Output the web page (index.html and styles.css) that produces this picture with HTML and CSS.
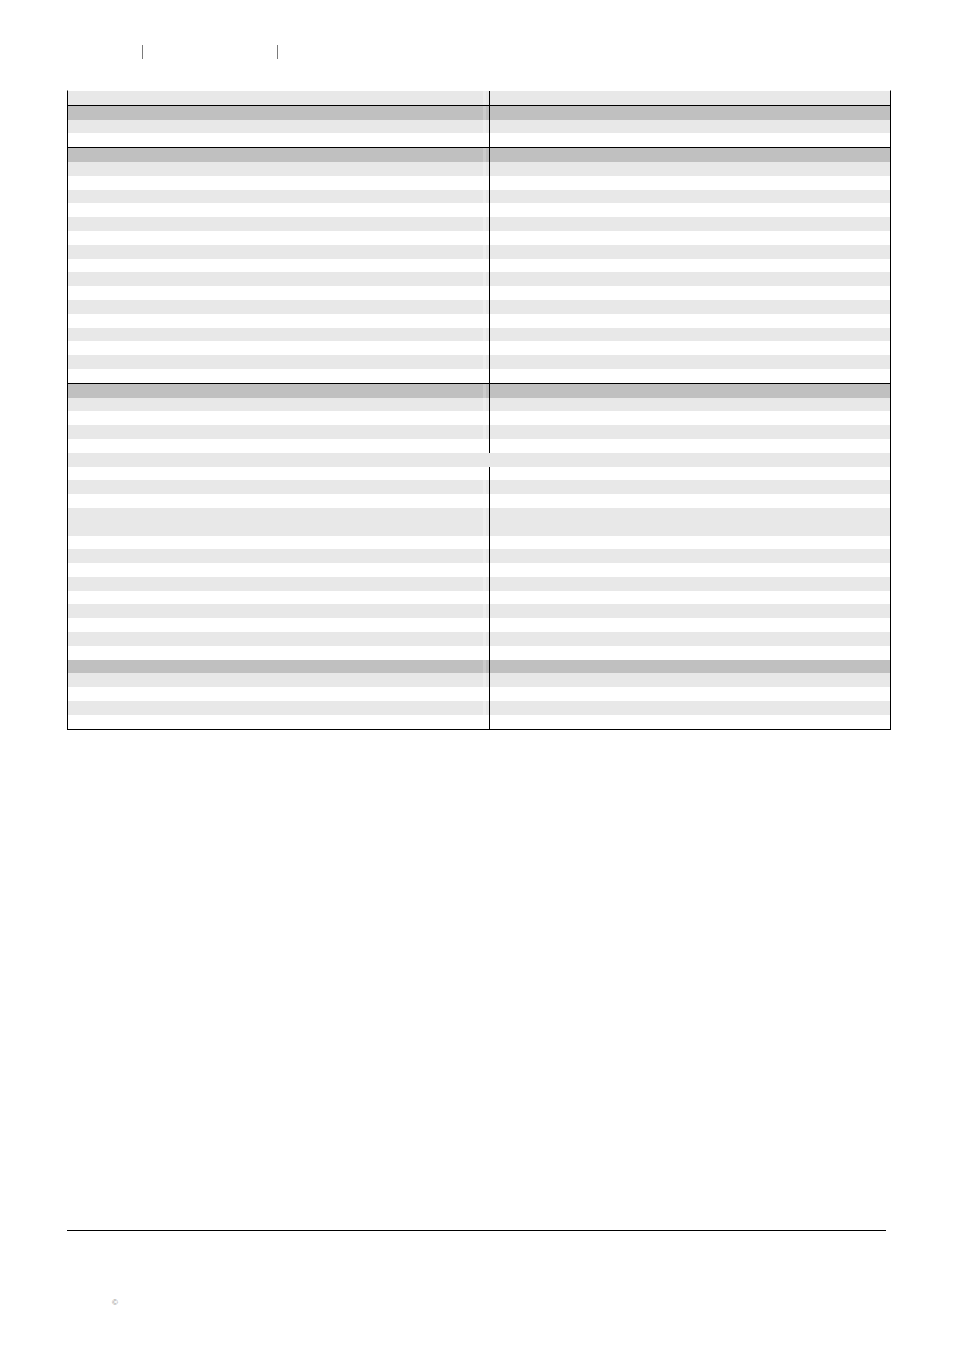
FILE: index.html
```html
<!DOCTYPE html>
<html>
<head>
<meta charset="utf-8">
<link rel="stylesheet" href="styles.css">
</head>
<body>
<div class="page">
  <div class="top">
    <span class="bar"></span>
    <span class="bar bar2"></span>
  </div>

  <div class="tbl">
    <div class="row l"><div class="c"></div><div class="d"></div><div class="c"></div></div>
    <div class="sep"></div>
    <div class="row h"><div class="c"></div><div class="d"></div><div class="c"></div></div>
    <div class="row l"><div class="c"></div><div class="d"></div><div class="c"></div></div>
    <div class="row w"><div class="c"></div><div class="d"></div><div class="c"></div></div>
    <div class="sep"></div>
    <div class="row h"><div class="c"></div><div class="d"></div><div class="c"></div></div>
    <div class="row l"><div class="c"></div><div class="d"></div><div class="c"></div></div>
    <div class="row w"><div class="c"></div><div class="d"></div><div class="c"></div></div>
    <div class="row l"><div class="c"></div><div class="d"></div><div class="c"></div></div>
    <div class="row w"><div class="c"></div><div class="d"></div><div class="c"></div></div>
    <div class="row l"><div class="c"></div><div class="d"></div><div class="c"></div></div>
    <div class="row w"><div class="c"></div><div class="d"></div><div class="c"></div></div>
    <div class="row l"><div class="c"></div><div class="d"></div><div class="c"></div></div>
    <div class="row w"><div class="c"></div><div class="d"></div><div class="c"></div></div>
    <div class="row l"><div class="c"></div><div class="d"></div><div class="c"></div></div>
    <div class="row w"><div class="c"></div><div class="d"></div><div class="c"></div></div>
    <div class="row l"><div class="c"></div><div class="d"></div><div class="c"></div></div>
    <div class="row w"><div class="c"></div><div class="d"></div><div class="c"></div></div>
    <div class="row l"><div class="c"></div><div class="d"></div><div class="c"></div></div>
    <div class="row w"><div class="c"></div><div class="d"></div><div class="c"></div></div>
    <div class="row l"><div class="c"></div><div class="d"></div><div class="c"></div></div>
    <div class="row w"><div class="c"></div><div class="d"></div><div class="c"></div></div>
    <div class="sep"></div>
    <div class="row h"><div class="c"></div><div class="d"></div><div class="c"></div></div>
    <div class="row l"><div class="c"></div><div class="d"></div><div class="c"></div></div>
    <div class="row w"><div class="c"></div><div class="d"></div><div class="c"></div></div>
    <div class="row l"><div class="c"></div><div class="d"></div><div class="c"></div></div>
    <div class="row w"><div class="c"></div><div class="d"></div><div class="c"></div></div>
    <div class="row l full"><div class="c span"></div></div>
    <div class="row w"><div class="c"></div><div class="d"></div><div class="c"></div></div>
    <div class="row l"><div class="c"></div><div class="d"></div><div class="c"></div></div>
    <div class="row w"><div class="c"></div><div class="d"></div><div class="c"></div></div>
    <div class="row l tall"><div class="c"></div><div class="d"></div><div class="c"></div></div>
    <div class="row w"><div class="c"></div><div class="d"></div><div class="c"></div></div>
    <div class="row l"><div class="c"></div><div class="d"></div><div class="c"></div></div>
    <div class="row w"><div class="c"></div><div class="d"></div><div class="c"></div></div>
    <div class="row l"><div class="c"></div><div class="d"></div><div class="c"></div></div>
    <div class="row w"><div class="c"></div><div class="d"></div><div class="c"></div></div>
    <div class="row l"><div class="c"></div><div class="d"></div><div class="c"></div></div>
    <div class="row w"><div class="c"></div><div class="d"></div><div class="c"></div></div>
    <div class="row l"><div class="c"></div><div class="d"></div><div class="c"></div></div>
    <div class="row w"><div class="c"></div><div class="d"></div><div class="c"></div></div>
    <div class="row h"><div class="c"></div><div class="d"></div><div class="c"></div></div>
    <div class="row l"><div class="c"></div><div class="d"></div><div class="c"></div></div>
    <div class="row w"><div class="c"></div><div class="d"></div><div class="c"></div></div>
    <div class="row l"><div class="c"></div><div class="d"></div><div class="c"></div></div>
    <div class="row w"><div class="c"></div><div class="d"></div><div class="c"></div></div>
  </div>

  <div class="foot">
    <div class="rule"></div>
    <div class="copy">&copy;</div>
  </div>
</div>
</body>
</html>
```

FILE: styles.css
```css
html, body {
  margin: 0;
  padding: 0;
  background: #ffffff;
}

body {
  font-family: "Liberation Sans", Arial, sans-serif;
  width: 954px;
  height: 1350px;
  overflow: hidden;
}

.page {
  display: flex;
  flex-direction: column;
  padding-left: 67px;
}

.top {
  height: 90px;
  box-sizing: border-box;
  padding-top: 45px;
  padding-left: 75px;
  display: flex;
  align-items: flex-start;
}

.bar {
  display: block;
  width: 1px;
  height: 14px;
  background: #7a7a7a;
}

.bar2 {
  margin-left: 134px;
}

.tbl {
  width: 824px;
  box-sizing: border-box;
  border-left: 1px solid #000;
  border-right: 1px solid #000;
  border-bottom: 1px solid #000;
  border-top: 1px solid #fff;
  display: flex;
  flex-direction: column;
}

.row {
  display: grid;
  grid-template-columns: 421px 1px 400px;
  height: 13.8px;
}

.row.tall {
  height: 27.6px;
}

.row.full {
  grid-template-columns: 822px;
}

.d {
  background: #000;
}

.row.l .c {
  background: #e8e8e8;
}

.row.l .c:first-child {
  background: linear-gradient(to right, transparent 415px, #eeeeee 415px, #eeeeee 418px, transparent 418px), #e8e8e8;
}

.row.l .c.span {
  background: #e8e8e8;
}

.row.h .c {
  background: #c0c0c0;
}

.row.h .c:first-child {
  background: linear-gradient(to right, transparent 415px, #cccccc 415px, #cccccc 418px, transparent 418px), #c0c0c0;
}

.row.w .c {
  background: #ffffff;
}

.sep {
  height: 1px;
  background: #000;
}

.foot {
  display: flex;
  flex-direction: column;
  padding-top: 500px;
}

.rule {
  width: 819px;
  height: 1px;
  background: #000;
}

.copy {
  margin-top: 67px;
  margin-left: 45px;
  font-size: 8px;
  line-height: 10px;
  color: #8a8a8a;
}
```
